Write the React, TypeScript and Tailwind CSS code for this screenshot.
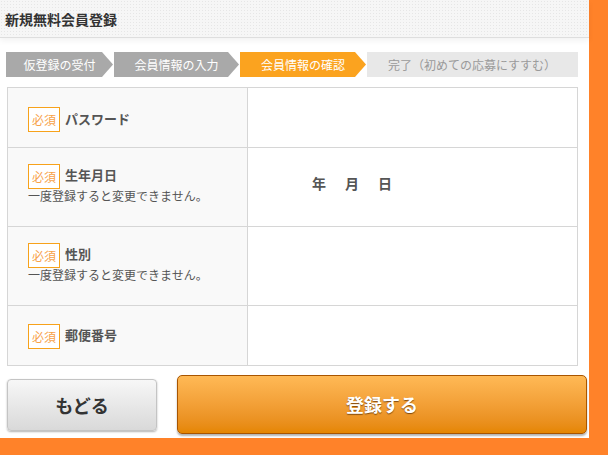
import React from "react";

function Badge() {
  return (
    <span className="inline-block align-middle w-[32px] h-[25px] -my-[3px] mr-[5px] border border-[#f7a21b] bg-white text-center leading-[23px] text-[12px] font-normal text-[#f7a24a]">
      必須
    </span>
  );
}

export default function App() {
  return (
    <div className="w-[608px] h-[455px] bg-[#ff8229] font-['Noto_Sans_CJK_JP','Noto_Sans',sans-serif]">
      <div className="w-[589px] h-[438px] bg-white flex flex-col">
        <div className="h-[38px] shrink-0 border-b border-[#dedede] bg-[#f6f6f6] bg-[radial-gradient(#e6e6e6_0.8px,transparent_0.8px)] bg-[length:3px_3px] shadow-[0_3px_6px_rgba(0,0,0,0.05)] flex items-center pl-[5px]">
          <h1 className="text-[14px] font-bold text-[#333] leading-none">新規無料会員登録</h1>
        </div>

        <div className="mt-[14px] ml-[6px] flex gap-[1px] h-[25px] text-[12px] leading-[25px]">
          <div className="w-[107px] bg-[#a9a9a9] text-white text-center [clip-path:polygon(0_0,calc(100%-11px)_0,100%_50%,calc(100%-11px)_100%,0_100%)]">
            仮登録の受付
          </div>
          <div className="w-[125px] bg-[#a9a9a9] text-white text-center [clip-path:polygon(0_0,calc(100%-11px)_0,100%_50%,calc(100%-11px)_100%,0_100%)]">
            会員情報の入力
          </div>
          <div className="w-[126px] bg-[#fba31f] text-white text-center [clip-path:polygon(0_0,calc(100%-11px)_0,100%_50%,calc(100%-11px)_100%,0_100%)]">
            会員情報の確認
          </div>
          <div className="w-[211px] bg-[#e8e8e8] text-[#9a9a9a] pl-[21px]">
            完了（初めての応募にすすむ）
          </div>
        </div>

        <div className="mt-[10px] ml-[7px] w-[571px] border border-[#d6d6d6] text-[#555]">
          <div className="flex h-[60px] border-b border-[#d6d6d6]">
            <div className="w-[240px] border-r border-[#d6d6d6] bg-[#f9f9f9] pl-[20px] flex items-center pt-[3px]">
              <div className="leading-[19px] text-[13px] font-bold">
                <Badge />
                パスワード
              </div>
            </div>
            <div className="flex-1" />
          </div>
          <div className="flex h-[79px] border-b border-[#d6d6d6]">
            <div className="w-[240px] border-r border-[#d6d6d6] bg-[#f9f9f9] pl-[20px] flex items-center">
              <div className="leading-[19px] mb-[4px]">
                <div className="text-[13px] font-bold">
                  <Badge />
                  生年月日
                </div>
                <div className="text-[12px]">一度登録すると変更できません。</div>
              </div>
            </div>
            <div className="flex-1 flex items-center pl-[64px] pb-[7px] gap-[19px] text-[14px] font-bold text-[#555]">
              <span>年</span>
              <span>月</span>
              <span>日</span>
            </div>
          </div>
          <div className="flex h-[79px] border-b border-[#d6d6d6]">
            <div className="w-[240px] border-r border-[#d6d6d6] bg-[#f9f9f9] pl-[20px] flex items-center">
              <div className="leading-[19px] mb-[4px]">
                <div className="text-[13px] font-bold">
                  <Badge />
                  性別
                </div>
                <div className="text-[12px]">一度登録すると変更できません。</div>
              </div>
            </div>
            <div className="flex-1" />
          </div>
          <div className="flex h-[59px]">
            <div className="w-[240px] border-r border-[#d6d6d6] bg-[#f9f9f9] pl-[20px] flex items-center">
              <div className="leading-[19px] text-[13px] font-bold">
                <Badge />
                郵便番号
              </div>
            </div>
            <div className="flex-1" />
          </div>
        </div>

        <div className="mt-[9px] flex items-start">
          <button className="ml-[7px] mt-[4px] w-[150px] h-[52px] rounded-[4px] border border-[#c4c4c4] bg-gradient-to-b from-[#f7f7f7] to-[#d9d9d9] shadow-[0_1px_2px_rgba(0,0,0,0.3)] text-[18px] font-bold text-[#333]">
            もどる
          </button>
          <button className="ml-[20px] w-[410px] h-[59px] rounded-[5px] border border-[#a85500] bg-gradient-to-b from-[#ffb955] to-[#e58600] shadow-[0_2px_2px_rgba(0,0,0,0.3)] text-[18px] font-bold text-white [text-shadow:0_1px_1px_rgba(80,40,0,0.7)]">
            登録する
          </button>
        </div>
      </div>
    </div>
  );
}
